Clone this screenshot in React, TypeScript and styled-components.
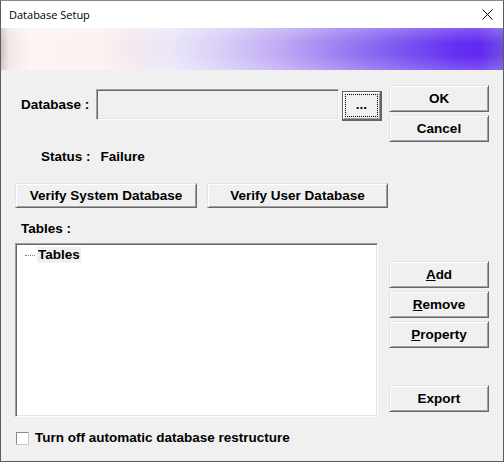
import React from "react";
import styled, { createGlobalStyle } from "styled-components";

const GlobalStyle = createGlobalStyle`
  html, body {
    margin: 0;
    padding: 0;
    background: #ffffff;
  }
`;

const Window = styled.div`
  box-sizing: border-box;
  width: 504px;
  height: 462px;
  display: flex;
  flex-direction: column;
  border: 1px solid #5c5c5c;
  border-top-color: #8a8a8a;
  background: #f0f0f0;
  overflow: hidden;
`;

const TitleBar = styled.div`
  height: 27px;
  flex-shrink: 0;
  display: flex;
  align-items: center;
  justify-content: space-between;
  padding: 0 10px 0 8px;
  background: #ffffff;
  font-family: "Segoe UI", "Open Sans", "Liberation Sans", sans-serif;
  font-size: 11px;
  color: #000;
`;

const CloseIcon = styled.svg`
  width: 11px;
  height: 11px;
`;

const Banner = styled.div`
  height: 42px;
  flex-shrink: 0;
  background:
    linear-gradient(
      180deg,
      rgba(255, 255, 255, 0.22) 0%,
      rgba(255, 255, 255, 0) 35%,
      rgba(255, 255, 255, 0) 65%,
      rgba(255, 255, 255, 0.18) 100%
    ),
    linear-gradient(
      90deg,
      #cbc3c3 0px,
      #efe6e6 8px,
      #fdf4f3 28px,
      #fbf1f1 100px,
      #f3e7f0 135px,
      #ebe6f9 170px,
      #d9cef7 220px,
      #bfaaf4 280px,
      #9b7ff1 340px,
      #7b56f0 400px,
      #6430f2 455px,
      #6129f2 478px,
      #7050e4 504px
    );
`;

const Body = styled.div`
  flex: 1;
  display: flex;
  padding-left: 14px;
  font-family: "Liberation Sans", Arial, sans-serif;
  font-weight: bold;
  font-size: 13.5px;
  color: #000;
`;

const LeftColumn = styled.div`
  width: 374px;
  display: flex;
  flex-direction: column;
`;

const RightColumn = styled.div`
  width: 100px;
  display: flex;
  flex-direction: column;
`;

const DbRow = styled.div`
  margin-top: 19px;
  height: 31px;
  display: flex;
  align-items: center;
`;

const Label = styled.div<{ $indent?: number; $width?: number; $mt?: number }>`
  padding-left: ${(p) => p.$indent ?? 0}px;
  margin-top: ${(p) => p.$mt ?? 0}px;
  width: ${(p) => (p.$width ? `${p.$width}px` : "auto")};
  box-sizing: border-box;
  line-height: 16px;
  white-space: nowrap;
`;

const PathInput = styled.div`
  box-sizing: border-box;
  width: 243px;
  height: 31px;
  border: 1px solid;
  border-color: #a0a0a0 #ffffff #ffffff #a0a0a0;
  box-shadow: inset 1px 1px 0 #696969, inset -1px -1px 0 #e3e3e3;
  background: #f0f0f0;
`;

const Button = styled.button<{ $w?: number; $h?: number; $mt?: number }>`
  box-sizing: border-box;
  width: ${(p) => p.$w ?? 100}px;
  height: ${(p) => p.$h ?? 27}px;
  margin: ${(p) => p.$mt ?? 0}px 0 0 0;
  padding: 0;
  border: 1px solid;
  border-color: #e3e3e3 #696969 #696969 #e3e3e3;
  box-shadow: inset 1px 1px 0 #ffffff, inset -1px -1px 0 #a0a0a0;
  background: #f0f0f0;
  font: inherit;
  color: #000;
  display: flex;
  align-items: center;
  justify-content: center;
  white-space: nowrap;
  cursor: default;

  u {
    text-decoration: underline;
    text-underline-offset: 1px;
  }
`;

const BrowseButton = styled.button`
  box-sizing: border-box;
  width: 40px;
  height: 30px;
  margin: 2px 0 0 3px;
  padding: 2px;
  border: 1px solid #646464;
  border-right-width: 2px;
  border-bottom-width: 2px;
  box-shadow: inset 1px 1px 0 #ffffff, inset -1px -1px 0 #a0a0a0;
  background: #f0f0f0;
  font: inherit;
  color: #000;
  display: flex;
  cursor: default;
`;

const FocusRing = styled.span`
  flex: 1;
  display: flex;
  align-items: center;
  justify-content: center;
  border: 1px dotted #000;
  padding-bottom: 2px;
`;

const StatusRow = styled.div`
  margin-top: 29px;
  display: flex;
  padding-left: 26px;
  line-height: 16px;
  gap: 10px;
`;

const ButtonRow = styled.div`
  margin-top: 18px;
  display: flex;
  gap: 10px;
`;

const TreeBox = styled.div`
  box-sizing: border-box;
  margin-top: 6px;
  width: 363px;
  height: 174px;
  border: 1px solid;
  border-color: #a0a0a0 #ffffff #ffffff #a0a0a0;
  box-shadow: inset 1px 1px 0 #696969, inset -1px -1px 0 #e3e3e3;
  background: #ffffff;
  padding: 3px 0 0 9px;
`;

const TreeItem = styled.div`
  display: flex;
  align-items: center;
  height: 16px;
`;

const TreeLine = styled.span`
  width: 10px;
  border-top: 1px dotted #808080;
  margin-right: 2px;
`;

const TreeLabel = styled.span`
  background: #f0f0f0;
  padding: 0 1px;
  line-height: 16px;
`;

const CheckRow = styled.label`
  margin-top: 13px;
  display: flex;
  align-items: center;
  gap: 6px;
  line-height: 16px;
`;

const CheckBox = styled.span`
  box-sizing: border-box;
  width: 13px;
  height: 13px;
  margin-left: 1px;
  border: 1px solid;
  border-color: #8a8a8a #c8c8c8 #c8c8c8 #8a8a8a;
  background: #ffffff;
`;

export default function App() {
  return (
    <>
      <GlobalStyle />
      <Window>
        <TitleBar>
          <span>Database Setup</span>
          <CloseIcon viewBox="0 0 11 11">
            <path d="M0.5 0.5 L10.5 10.5 M10.5 0.5 L0.5 10.5" stroke="#000" strokeWidth="1" fill="none" />
          </CloseIcon>
        </TitleBar>
        <Banner />
        <Body>
          <LeftColumn>
            <DbRow>
              <Label $indent={6} $width={81}>Database :</Label>
              <PathInput />
              <BrowseButton>
                <FocusRing>...</FocusRing>
              </BrowseButton>
            </DbRow>
            <StatusRow>
              <span>Status :</span>
              <span>Failure</span>
            </StatusRow>
            <ButtonRow>
              <Button $w={182} $h={25}>Verify System Database</Button>
              <Button $w={181} $h={25}>Verify User Database</Button>
            </ButtonRow>
            <Label $indent={6} $mt={13}>Tables :</Label>
            <TreeBox>
              <TreeItem>
                <TreeLine />
                <TreeLabel>Tables</TreeLabel>
              </TreeItem>
            </TreeBox>
            <CheckRow>
              <CheckBox />
              <span>Turn off automatic database restructure</span>
            </CheckRow>
          </LeftColumn>
          <RightColumn>
            <Button $mt={15}>OK</Button>
            <Button $mt={3}>Cancel</Button>
            <Button $mt={119}>
              <span><u>A</u>dd</span>
            </Button>
            <Button $mt={3}>
              <span><u>R</u>emove</span>
            </Button>
            <Button $mt={3}>
              <span><u>P</u>roperty</span>
            </Button>
            <Button $mt={37}>Export</Button>
          </RightColumn>
        </Body>
      </Window>
    </>
  );
}
